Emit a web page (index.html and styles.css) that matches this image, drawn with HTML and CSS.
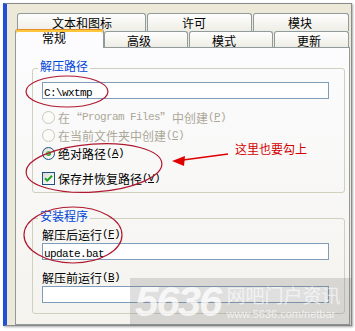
FILE: index.html
```html
<!DOCTYPE html>
<html lang="zh-CN">
<head>
  <meta charset="UTF-8">
  <meta name="viewport" content="width=device-width, initial-scale=1.0">
  <title>自解压选项</title>
  <link rel="stylesheet" href="styles.css">
</head>
<body>
  <div class="window">
    <div class="tab-row back">
      <div class="tab tab-text">文本和图标</div>
      <div class="tab tab-license">许可</div>
      <div class="tab tab-module">模块</div>
    </div>
    <div class="tab-row front">
      <div class="tab active tab-general">常规</div>
      <div class="tab tab-adv">高级</div>
      <div class="tab tab-mode">模式</div>
      <div class="tab tab-update">更新</div>
    </div>

    <div class="panel">
      <fieldset class="group path-group">
        <legend>解压路径</legend>
        <div class="group-body">
          <div class="textbox"><span class="en">C:\wxtmp</span></div>
          <div class="option disabled first"><span class="radio"></span>在“<span class="en">Program Files</span>”中创建<span class="en">(<u>P</u>)</span></div>
          <div class="option disabled"><span class="radio"></span>在当前文件夹中创建<span class="en">(<u>C</u>)</span></div>
          <div class="option"><span class="radio checked"></span>绝对路径<span class="en">(<u>A</u>)</span></div>
          <div class="option check-row">
            <span class="checkbox">
              <svg width="11" height="11" viewBox="0 0 11 11"><path d="M2 5.2 L4.3 7.6 L9 2.8" stroke="#21a121" stroke-width="2" fill="none"/></svg>
            </span>保存并恢复路径<span class="en">(<u>V</u>)</span>
          </div>
        </div>
      </fieldset>

      <fieldset class="group setup-group">
        <legend>安装程序</legend>
        <div class="group-body">
          <div class="label">解压后运行<span class="en">(<u>F</u>)</span></div>
          <div class="textbox"><span class="en">update.bat</span></div>
          <div class="label second">解压前运行<span class="en">(<u>B</u>)</span></div>
          <div class="textbox"></div>
        </div>
      </fieldset>
    </div>
  </div>

  <!-- screenshot watermark -->
  <div class="watermark">
    <span class="wm-num">5636</span>
    <div class="wm-text">
      <span class="wm-title">网吧门户资讯</span>
      <span class="wm-url">www.5636.com/netbar</span>
    </div>
  </div>

  <!-- red hand-drawn notes -->
  <svg class="notes" width="355" height="331" viewBox="0 0 355 331">
    <ellipse cx="67" cy="91.5" rx="41" ry="15.5" fill="none" stroke="#b01830" stroke-width="1.2"/>
    <ellipse cx="94" cy="168" rx="68" ry="24" transform="rotate(-4 94 168)" fill="none" stroke="#b01830" stroke-width="1.2"/>
    <ellipse cx="73" cy="235" rx="49" ry="28" fill="none" stroke="#b01830" stroke-width="1.2"/>
    <path d="M228 154 L183 160" stroke="#e00000" stroke-width="1.5"/>
    <polygon points="172,161 185,156 184,166" fill="#e00000"/>
  </svg>
  <div class="note-text">这里也要勾上</div>
</body>
</html>
```

FILE: styles.css
```css
* {
  box-sizing: border-box;
}

body {
  margin: 0;
  width: 355px;
  height: 331px;
  overflow: hidden;
  position: relative;
  background: #fff;
  font-family: "Noto Sans CJK SC", sans-serif;
  font-size: 12px;
  color: #000;
}

.en {
  font-family: "Liberation Mono", monospace;
  font-size: 11px;
  letter-spacing: -0.6px;
}

.window {
  margin: 3px 0 0 3px;
  width: 349px;
  height: 323px;
  background: #ece9d8;
  border: 1px solid #8c8c8c;
  border-left: 4px solid #1f50d6;
  box-shadow: 1px 1px 2px rgba(0, 0, 0, 0.35);
  padding: 9px 1px 0 8px;
  display: flex;
  flex-direction: column;
}

/* tabs */
.tab-row {
  display: flex;
  align-items: flex-start;
  flex: none;
}

.tab-row.back {
  height: 18px;
  margin-left: 2px;
}

.tab-row.front {
  height: 16px;
}

.tab {
  border: 1px solid #919b9c;
  border-bottom: none;
  border-radius: 3px 3px 0 0;
  background: linear-gradient(#fefefe, #eeede5);
  line-height: 12px;
  white-space: nowrap;
  margin-right: 1px;
}

.back .tab {
  height: 18px;
  padding: 3px 0 0 34px;
}

.front .tab {
  height: 16px;
  padding: 3px 0 0 22px;
}

.tab-text { width: 129px; }
.tab-license { width: 105px; }
.tab-module { width: 96px; margin-right: 0; }

.front .tab.active {
  width: 89px;
  height: 19px;
  margin: -2px 0 0 0;
  padding: 0 0 0 26px;
  border-top: 1px solid #e68b2c;
  box-shadow: inset 0 2px 0 #ffc73c;
  background: #fcfcfe;
  position: relative;
  z-index: 1;
  padding-top: 2px;
}

.tab-adv { width: 84px; }
.tab-mode { width: 84px; }
.tab-update { width: 75px; margin-right: 0; }

/* page */
.panel {
  flex: 1;
  border: 1px solid #919b9c;
  background: linear-gradient(#fcfcfe, #f4f3ee);
  padding: 12px 4px 0 16px;
}

.group {
  margin: 0;
  padding: 0;
  min-width: 0;
  border: 1px solid #d0d0bf;
  border-radius: 3px;
}

.group legend {
  margin-left: 5px;
  padding: 0 2px 4px;
  line-height: 12px;
  color: #0046d5;
}

.setup-group {
  margin-top: 17px;
}

.group-body {
  padding: 6px 15px 5px 9px;
}

.setup-group .group-body {
  padding: 0 15px 10px 9px;
}

.textbox {
  height: 17px;
  border: 1px solid #7f9db9;
  background: #fff;
  padding-left: 1px;
  line-height: 15px;
}

.option {
  height: 18px;
  display: flex;
  align-items: center;
  white-space: nowrap;
}

.option.first {
  margin-top: 9px;
}

.option.disabled {
  color: #aca899;
}

.option.check-row {
  margin-top: 7px;
}

.radio {
  flex: none;
  position: relative;
  width: 13px;
  height: 13px;
  margin-right: 3px;
  border-radius: 50%;
  border: 1px solid #1c5180;
  background: radial-gradient(circle at 65% 65%, #fff, #dcdbd3);
}

.option.disabled .radio {
  border-color: #cac8bb;
  background: #fbfbf8;
}

.radio.checked::after {
  content: "";
  position: absolute;
  left: 3px;
  top: 3px;
  width: 5px;
  height: 5px;
  border-radius: 50%;
  background: radial-gradient(circle at 40% 40%, #7de07a, #21a121 70%, #0b8a0b);
}

.checkbox {
  flex: none;
  width: 13px;
  height: 13px;
  margin-right: 3px;
  border: 1px solid #1c5180;
  background: linear-gradient(135deg, #dcdbd3, #fff);
  display: flex;
}

.label {
  height: 16px;
  display: flex;
  align-items: center;
}

.label + .textbox {
  margin-top: 1px;
}

.label.second {
  margin-top: 9px;
}

/* overlays */
.watermark {
  position: absolute;
  left: 130px;
  top: 278px;
  width: 222px;
  height: 48px;
  background: rgba(110, 110, 110, 0.22);
  display: flex;
  align-items: center;
  gap: 6px;
  padding-left: 5px;
  color: rgba(255, 255, 255, 0.75);
}

.wm-num {
  font-family: "Liberation Sans", sans-serif;
  font-weight: bold;
  font-style: italic;
  font-size: 42px;
  letter-spacing: -2px;
  line-height: 40px;
}

.wm-text {
  display: flex;
  flex-direction: column;
  line-height: 1;
}

.wm-title {
  font-size: 19px;
  color: rgba(255, 255, 255, 0.6);
}

.wm-url {
  margin-top: 5px;
  font-family: "Liberation Sans", sans-serif;
  font-size: 11px;
  color: rgba(255, 255, 255, 0.7);
}

.notes {
  position: absolute;
  left: 0;
  top: 0;
  pointer-events: none;
}

.note-text {
  position: absolute;
  left: 235px;
  top: 142px;
  line-height: 14px;
  color: #d40000;
}
```
